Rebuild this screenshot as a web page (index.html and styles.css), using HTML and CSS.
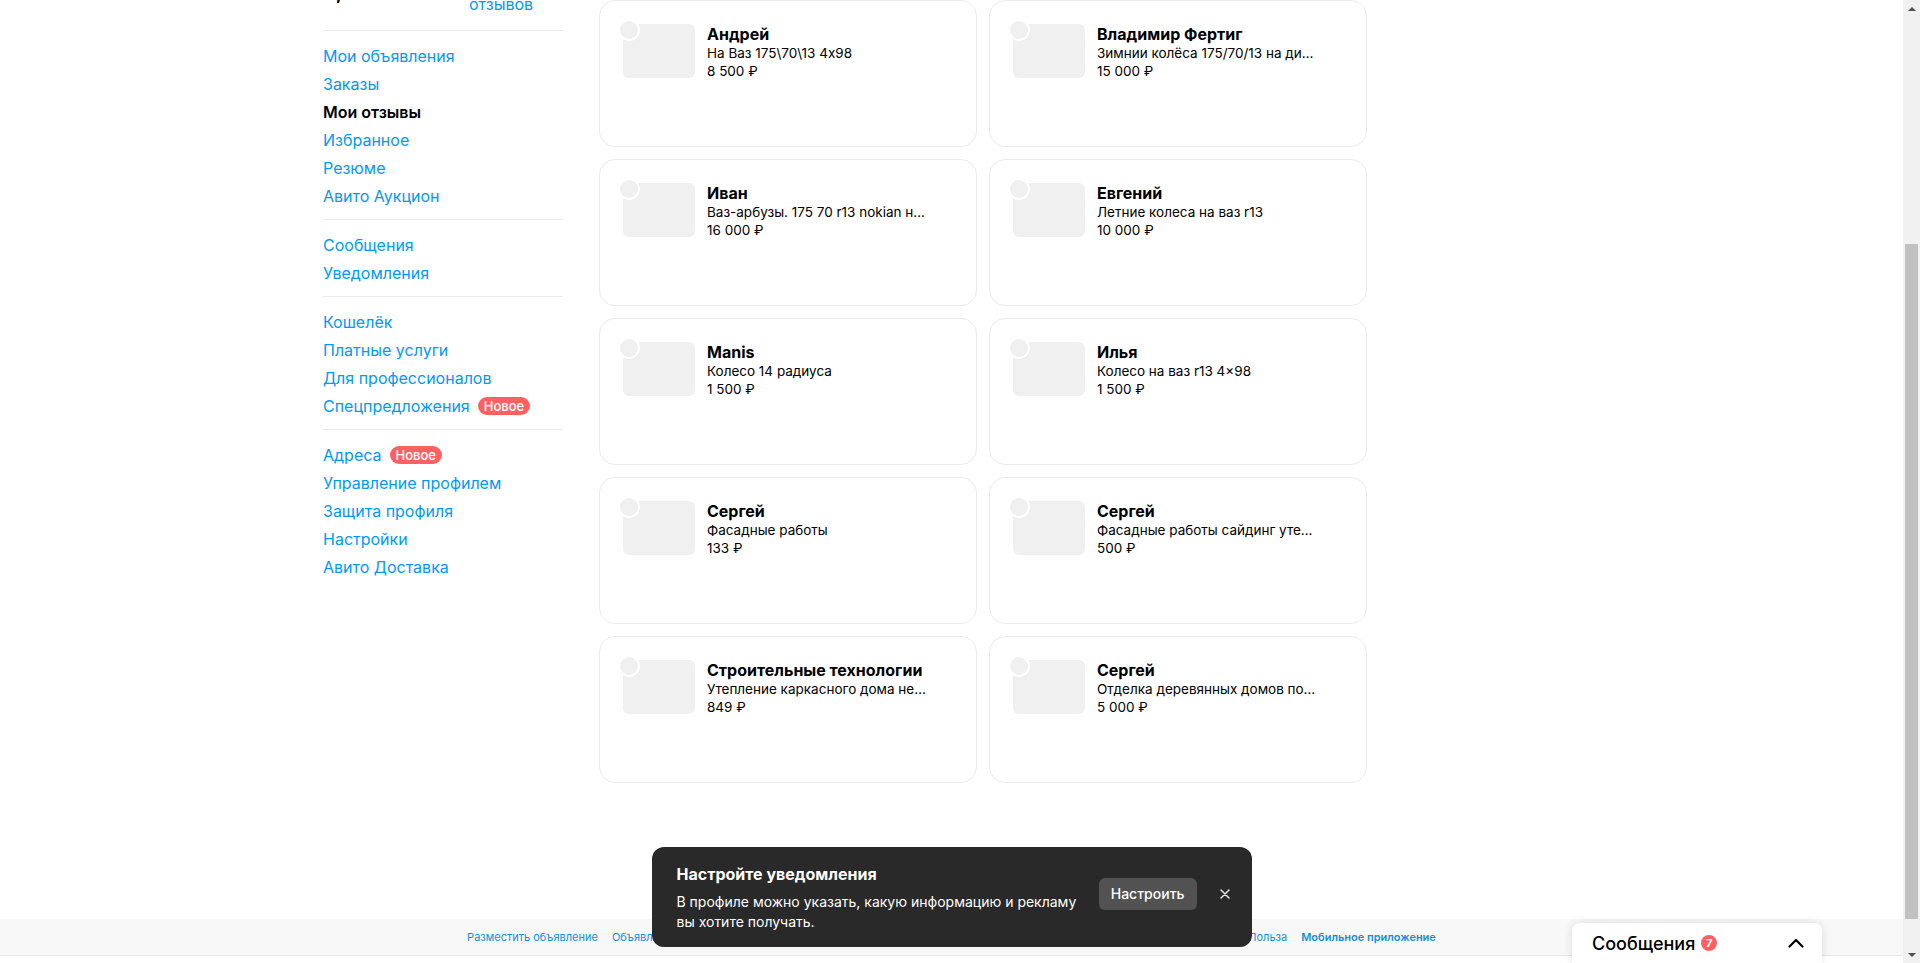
FILE: index.html
```html
<!DOCTYPE html>
<html lang="ru">
<head>
    <meta charset="UTF-8">
    <meta name="viewport" content="width=device-width, initial-scale=1.0">
    <title>Мои отзывы</title>
    <link rel="stylesheet" href="styles.css">
</head>
<body>
    <div class="viewport">
        <div class="layout">
            <aside class="sidebar">
                <div class="rating">
                    <span class="rating-score">4,9</span>
                    <a class="rating-link" href="#">12 отзывов</a>
                </div>
                <nav class="menu">
                    <div class="menu-group">
                        <a class="menu-item" href="#">Мои объявления</a>
                        <a class="menu-item" href="#">Заказы</a>
                        <a class="menu-item active" href="#">Мои отзывы</a>
                        <a class="menu-item" href="#">Избранное</a>
                        <a class="menu-item" href="#">Резюме</a>
                        <a class="menu-item" href="#">Авито Аукцион</a>
                    </div>
                    <div class="menu-group">
                        <a class="menu-item" href="#">Сообщения</a>
                        <a class="menu-item" href="#">Уведомления</a>
                    </div>
                    <div class="menu-group">
                        <a class="menu-item" href="#">Кошелёк</a>
                        <a class="menu-item" href="#">Платные услуги</a>
                        <a class="menu-item" href="#">Для профессионалов</a>
                        <a class="menu-item" href="#">Спецпредложения <span class="badge">Новое</span></a>
                    </div>
                    <div class="menu-group">
                        <a class="menu-item" href="#">Адреса <span class="badge">Новое</span></a>
                        <a class="menu-item" href="#">Управление профилем</a>
                        <a class="menu-item" href="#">Защита профиля</a>
                        <a class="menu-item" href="#">Настройки</a>
                        <a class="menu-item" href="#">Авито Доставка</a>
                    </div>
                </nav>
            </aside>

            <main class="reviews">
                <div class="card">
                    <div class="card-thumb"><span class="card-avatar"></span></div>
                    <div class="card-info">
                        <div class="card-name">Андрей</div>
                        <div class="card-title">На Ваз 175\70\13 4x98</div>
                        <div class="card-price">8 500 ₽</div>
                    </div>
                </div>
                <div class="card">
                    <div class="card-thumb"><span class="card-avatar"></span></div>
                    <div class="card-info">
                        <div class="card-name">Владимир Фертиг</div>
                        <div class="card-title">Зимнии колёса 175/70/13 на дисках</div>
                        <div class="card-price">15 000 ₽</div>
                    </div>
                </div>
                <div class="card">
                    <div class="card-thumb"><span class="card-avatar"></span></div>
                    <div class="card-info">
                        <div class="card-name">Иван</div>
                        <div class="card-title">Ваз-арбузы. 175 70 r13 nokian нордман</div>
                        <div class="card-price">16 000 ₽</div>
                    </div>
                </div>
                <div class="card">
                    <div class="card-thumb"><span class="card-avatar"></span></div>
                    <div class="card-info">
                        <div class="card-name">Евгений</div>
                        <div class="card-title">Летние колеса на ваз r13</div>
                        <div class="card-price">10 000 ₽</div>
                    </div>
                </div>
                <div class="card">
                    <div class="card-thumb"><span class="card-avatar"></span></div>
                    <div class="card-info">
                        <div class="card-name">Manis</div>
                        <div class="card-title">Колесо 14 радиуса</div>
                        <div class="card-price">1 500 ₽</div>
                    </div>
                </div>
                <div class="card">
                    <div class="card-thumb"><span class="card-avatar"></span></div>
                    <div class="card-info">
                        <div class="card-name">Илья</div>
                        <div class="card-title">Колесо на ваз r13 4x98</div>
                        <div class="card-price">1 500 ₽</div>
                    </div>
                </div>
                <div class="card">
                    <div class="card-thumb"><span class="card-avatar"></span></div>
                    <div class="card-info">
                        <div class="card-name">Сергей</div>
                        <div class="card-title">Фасадные работы</div>
                        <div class="card-price">133 ₽</div>
                    </div>
                </div>
                <div class="card">
                    <div class="card-thumb"><span class="card-avatar"></span></div>
                    <div class="card-info">
                        <div class="card-name">Сергей</div>
                        <div class="card-title">Фасадные работы сайдинг утепление</div>
                        <div class="card-price">500 ₽</div>
                    </div>
                </div>
                <div class="card">
                    <div class="card-thumb"><span class="card-avatar"></span></div>
                    <div class="card-info">
                        <div class="card-name">Строительные технологии</div>
                        <div class="card-title">Утепление каркасного дома недорого</div>
                        <div class="card-price">849 ₽</div>
                    </div>
                </div>
                <div class="card">
                    <div class="card-thumb"><span class="card-avatar"></span></div>
                    <div class="card-info">
                        <div class="card-name">Сергей</div>
                        <div class="card-title">Отделка деревянных домов под ключ</div>
                        <div class="card-price">5 000 ₽</div>
                    </div>
                </div>
            </main>
        </div>

        <footer class="footer">
            <nav class="footer-links">
                <a href="#">Разместить объявление</a>
                <a href="#">Объявления</a>
                <a href="#">Магазины</a>
                <a href="#">Помощь</a>
                <a href="#">Каталоги</a>
                <a href="#">Карьера в Авито</a>
                <a href="#">Реклама на сайте</a>
                <a href="#">О компании</a>
                <a href="#">Блог Авито</a>
                <a href="#">Польза</a>
                <a class="footer-app" href="#">Мобильное приложение</a>
            </nav>
        </footer>

        <!-- notification prompt -->
        <div class="toast">
            <div class="toast-body">
                <div class="toast-title">Настройте уведомления</div>
                <div class="toast-text">В профиле можно указать, какую информацию и рекламу вы хотите получать.</div>
            </div>
            <button class="toast-button">Настроить</button>
            <button class="toast-close" aria-label="Закрыть">
                <svg width="10" height="10" viewBox="0 0 10 10"><path d="M1 1l8 8M9 1l-8 8" stroke="#e6e6e6" stroke-width="1.5" stroke-linecap="round"/></svg>
            </button>
        </div>

        <!-- messenger widget -->
        <div class="messenger">
            <span class="messenger-title">Сообщения</span>
            <span class="messenger-count">7</span>
            <svg class="messenger-toggle" width="16" height="10" viewBox="0 0 16 10"><path d="M1.5 8.5L8 2l6.5 6.5" fill="none" stroke="#000" stroke-width="2.2" stroke-linecap="round" stroke-linejoin="round"/></svg>
        </div>
    </div>

    <div class="scrollbar">
        <span class="scroll-arrow up"></span>
        <div class="scroll-track"><div class="scroll-thumb"></div></div>
        <span class="scroll-arrow down"></span>
    </div>
</body>
</html>
```

FILE: styles.css
```css
:root {
    --text-color: #000;
    --link-color: #0099f7;
    --footer-link-color: #168de2;
    --divider-color: #ebebeb;
    --card-border: #ebebeb;
    --thumb-color: #f0f0f0;
    --badge-color: #ff6163;
    --toast-bg: #292929;
    --toast-button: #525252;
}

* {
    box-sizing: border-box;
}

body {
    margin: 0;
    height: 100vh;
    display: flex;
    overflow: hidden;
    font-family: Inter, "Noto Sans", sans-serif;
    color: var(--text-color);
    background-color: #fff;
}

a {
    text-decoration: none;
}

.viewport {
    flex: 1;
    position: relative;
    overflow: hidden;
}

.layout {
    width: 1257px;
    margin: 0 auto 136px;
    display: flex;
    align-items: flex-start;
}

/* left column */

.sidebar {
    width: 240px;
    flex-shrink: 0;
}

.rating {
    display: flex;
    align-items: flex-start;
    margin-top: -29px;
    margin-bottom: 15px;
}

.rating-score {
    width: 146px;
    margin-top: 9px;
    font-size: 20px;
    line-height: 24px;
    font-weight: 700;
}

.rating-link {
    width: 70px;
    font-size: 16px;
    line-height: 22px;
    color: var(--link-color);
}

.menu-group {
    border-top: 1px solid var(--divider-color);
    padding: 11px 0 9px;
}

.menu-item {
    display: flex;
    align-items: center;
    height: 28px;
    font-size: 16px;
    color: var(--link-color);
}

.menu-item.active {
    color: var(--text-color);
    font-weight: 600;
}

.badge {
    margin-left: 8px;
    height: 18px;
    padding: 0 6px;
    border-radius: 9px;
    background-color: var(--badge-color);
    color: #fff;
    font-size: 13px;
    font-weight: 500;
    line-height: 18px;
}

/* review cards */

.reviews {
    margin-left: 36px;
    display: grid;
    grid-template-columns: repeat(2, 378px);
    gap: 12px;
}

.card {
    height: 147px;
    display: flex;
    align-items: flex-start;
    padding: 23px;
    border: 1px solid var(--card-border);
    border-radius: 16px;
}

.card-thumb {
    position: relative;
    width: 72px;
    height: 54px;
    flex-shrink: 0;
    border-radius: 6px;
    background-color: var(--thumb-color);
}

.card-avatar {
    position: absolute;
    top: -5px;
    left: -5px;
    width: 22px;
    height: 22px;
    border-radius: 50%;
    border: 2px solid #fff;
    background-color: var(--thumb-color);
}

.card-info {
    width: 220px;
    margin-left: 12px;
}

.card-name {
    font-size: 16px;
    line-height: 20px;
    font-weight: 700;
    white-space: nowrap;
}

.card-title,
.card-price {
    font-size: 13.5px;
    line-height: 18px;
    white-space: nowrap;
}

.card-title {
    overflow: hidden;
    text-overflow: ellipsis;
}

/* footer */

.footer {
    height: 37px;
    background-color: #f8f8f8;
    border-bottom: 1px solid #e6e6e6;
}

.footer-links {
    display: flex;
    justify-content: center;
    gap: 14px;
    font-size: 11px;
    line-height: 36px;
}

.footer-links a {
    color: var(--footer-link-color);
}

.footer-links .footer-app {
    font-weight: 600;
}

/* notification prompt */

.toast {
    position: absolute;
    left: 50%;
    bottom: 16px;
    transform: translateX(-50%);
    width: 600px;
    display: flex;
    align-items: center;
    padding: 16px 22px 15px 25px;
    border-radius: 12px;
    background-color: var(--toast-bg);
    color: #fff;
}

.toast-body {
    flex: 1;
}

.toast-title {
    font-size: 16px;
    line-height: 22px;
    font-weight: 700;
    margin-bottom: 7px;
}

.toast-text {
    width: 400px;
    font-size: 14px;
    line-height: 20px;
}

.toast-button {
    height: 32px;
    margin-bottom: 8px;
    padding: 0 12px;
    border: none;
    border-radius: 6px;
    background-color: var(--toast-button);
    color: #fff;
    font-family: inherit;
    font-size: 14px;
    font-weight: 500;
    cursor: pointer;
}

.toast-close {
    display: flex;
    margin: 0 0 8px 23px;
    padding: 0;
    border: none;
    background: none;
    cursor: pointer;
}

/* messenger widget */

.messenger {
    position: absolute;
    right: 81px;
    bottom: 0;
    width: 250px;
    height: 40px;
    display: flex;
    align-items: center;
    padding: 0 18px 0 20px;
    border-radius: 8px 8px 0 0;
    background-color: #fff;
    box-shadow: 0 0 10px rgba(0, 0, 0, 0.12);
}

.messenger-title {
    font-size: 18px;
    font-weight: 500;
}

.messenger-count {
    width: 16px;
    height: 16px;
    margin-left: 6px;
    border-radius: 50%;
    background-color: var(--badge-color);
    color: #fff;
    font-size: 11px;
    font-weight: 700;
    line-height: 16px;
    text-align: center;
}

.messenger-toggle {
    margin-left: auto;
}

/* page scrollbar */

.scrollbar {
    width: 17px;
    flex-shrink: 0;
    display: flex;
    flex-direction: column;
    background-color: #f1f1f1;
}

.scroll-arrow {
    height: 17px;
    display: flex;
    align-items: center;
    justify-content: center;
}

.scroll-arrow::before {
    content: "";
    border-left: 4px solid transparent;
    border-right: 4px solid transparent;
}

.scroll-arrow.up::before {
    border-bottom: 4px solid #505050;
}

.scroll-arrow.down::before {
    border-top: 4px solid #505050;
}

.scroll-track {
    flex: 1;
}

.scroll-thumb {
    height: 675px;
    margin: 227px 2px 0;
    background-color: #c1c1c1;
}
```
